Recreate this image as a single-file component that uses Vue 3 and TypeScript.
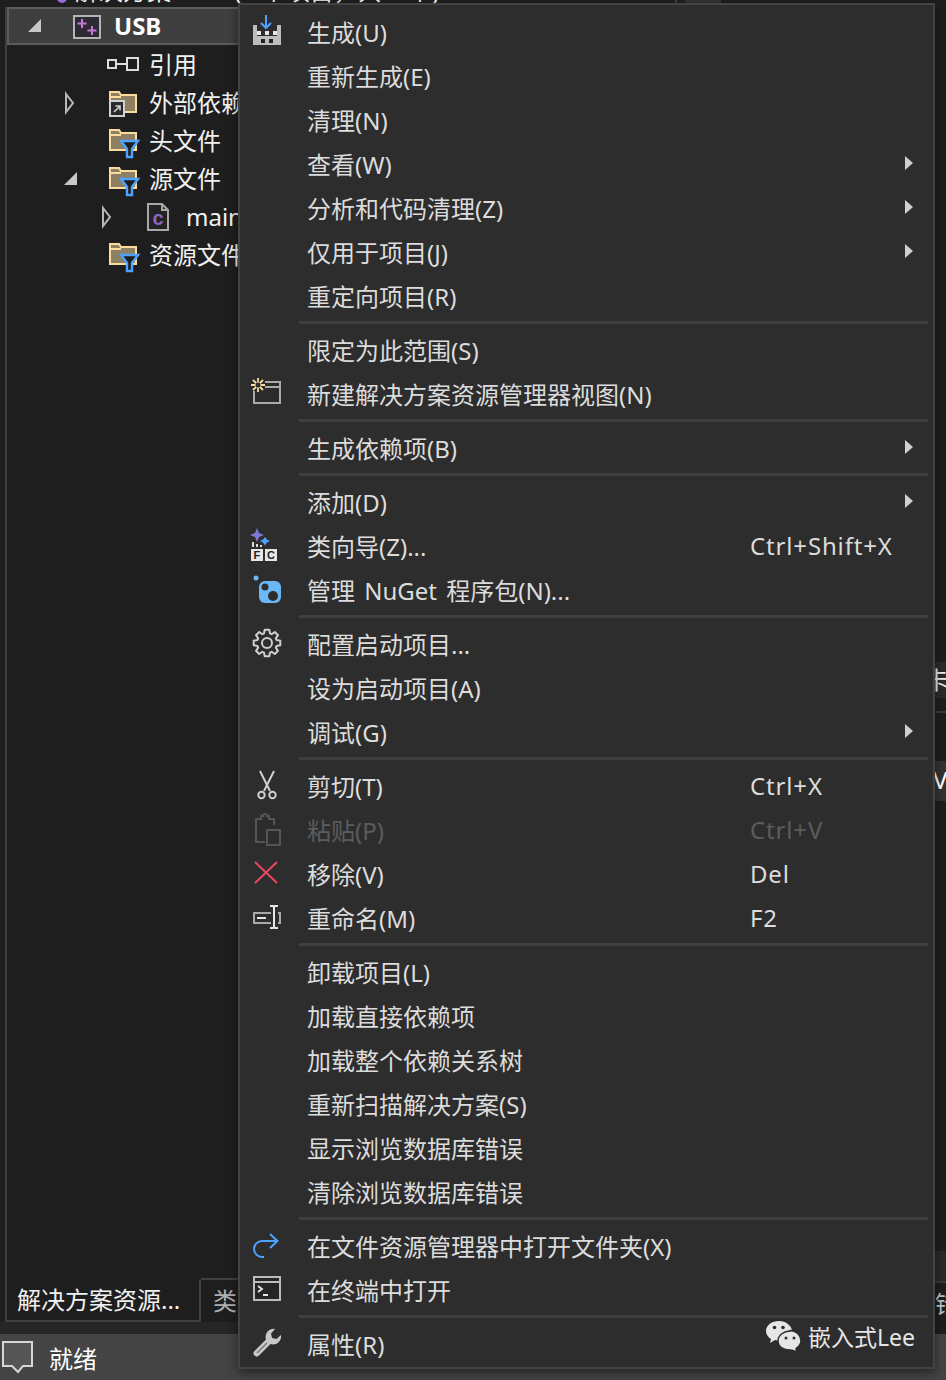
<template>
  <div class="app">
    <div class="workspace">
      <div class="panel">
        <div class="top-row">
          <span class="sol-dot"></span>
          <span class="sol-text">解决方案“USB”(1 个项目，共 1 个)</span>
          <span class="top-line"></span>
          <span class="top-band"></span>
        </div>
        <div class="tree">
          <div
            v-for="row in treeRows"
            :key="row.label"
            class="tree-row"
            :class="[`depth-${row.depth}`, { selected: row.selected }]"
          >
            <span class="tree-arrow">
              <svg v-if="row.arrow === 'open'" width="16" height="38" viewBox="0 0 16 38">
                <path :d="row.selected ? 'M14 12v13H1z' : 'M15 12v13H2z'" fill="#c8c8c8" />
              </svg>
              <svg v-else-if="row.arrow === 'closed'" width="16" height="38" viewBox="0 0 16 38">
                <path d="M4 10l7 9-7 9z" fill="none" stroke="#b8b8b8" stroke-width="2" />
              </svg>
            </span>
            <svg class="tree-icon" width="34" height="38" viewBox="0 0 34 38">
              <template v-if="row.icon === 'project'">
                <rect x="1" y="9" width="26" height="22" fill="#2e2a33" stroke="#b4b4b4" stroke-width="2" />
                <path d="M9 12v9M4.500 16.500h9M19 19v9M14.500 23.500h9" stroke="#c678d8" stroke-width="2" />
              </template>
              <template v-else-if="row.icon === 'ref'">
                <path d="M8 18h11" stroke="#ddd" stroke-width="2" />
                <rect x="0" y="14" width="8" height="8" fill="none" stroke="#ddd" stroke-width="2" />
                <rect x="19" y="12" width="11" height="12" fill="none" stroke="#ddd" stroke-width="2" />
              </template>
              <template v-else-if="row.icon === 'external'">
                <path d="M2 8h9l2 3h15v17H2z" fill="#8c7f62" stroke="#fbdc9f" stroke-width="2" />
                <path d="M3 13h10" stroke="#fbdc9f" stroke-width="2" />
                <rect x="2" y="17" width="14" height="15" fill="#2a2a2a" stroke="#d0d0d0" stroke-width="2" />
                <path d="M6 28l6-6M7.500 22H12v4.500" fill="none" stroke="#d0d0d0" stroke-width="1.600" />
              </template>
              <template v-else-if="row.icon === 'filter'">
                <path d="M2 8h9l2 3h15v17H2z" fill="#8c7f62" stroke="#fbdc9f" stroke-width="2" />
                <path d="M3 13h10" stroke="#fbdc9f" stroke-width="2" />
                <path d="M13 19h17l-6 8v8h-5v-8z" fill="#1e1e1e" stroke="#4da3ff" stroke-width="2.400" />
              </template>
              <template v-else-if="row.icon === 'file'">
                <path d="M3 6h14l6 6v20H3z" fill="#232323" stroke="#a8a8a8" stroke-width="2" />
                <path d="M17 6v6h6" fill="none" stroke="#a8a8a8" stroke-width="2" />
                <text x="7.500" y="27" class="c-glyph">c</text>
              </template>
            </svg>
            <span class="tree-label" :class="{ bold: row.selected }">{{ row.label }}</span>
          </div>
        </div>
        <div class="tabs">
          <div class="tab active">解决方案资源...</div>
          <div class="tab rest">类视图</div>
        </div>
        <div class="tabs-foot"></div>
      </div>

      <div class="edge">
        <div class="edge-gap first"></div>
        <div class="edge-band b1"><span class="edge-clip">卡</span></div>
        <div class="edge-gap small"></div>
        <div class="edge-band b2"><span class="edge-v">V</span></div>
        <div class="edge-gap"></div>
        <div class="edge-band b3"></div>
        <div class="edge-band b4"><span class="edge-low">错</span></div>
      </div>
    </div>

    <div class="status">
      <svg width="32" height="36" viewBox="0 0 32 36">
        <path d="M2 3h29v24H22l-5 6-6-6H2z" fill="#555" stroke="#d6d6d6" stroke-width="2" />
      </svg>
      <span class="status-text">就绪</span>
    </div>

    <div class="menu">
      <template v-for="(group, gi) in menuGroups" :key="gi">
        <div v-if="gi > 0" class="sep"></div>
        <div
          v-for="item in group"
          :key="item.label"
          class="menu-row"
          :class="{ disabled: item.disabled }"
        >
          <svg class="menu-icon" width="32" height="44" viewBox="0 0 32 44">
            <template v-if="item.icon === 'build'">
              <path d="M2 14h4v11h20V14h4v20H2z" fill="#bdbdbd" />
              <path d="M6 20h4v4H6zM14 20h4v4h-4zM22 20h4v4h-4z" fill="#e8e8e8" />
              <path d="M10 28h4v4h-4zM18 28h4v4h-4z" fill="#222" />
              <path d="M15 4v13M10 12l5 5 5-5" fill="none" stroke="#4da3ff" stroke-width="2" />
            </template>
            <template v-else-if="item.icon === 'newview'">
              <path d="M14 9h15v21H3V18" fill="#2b2b2b" stroke="#ababab" stroke-width="2" />
              <path d="M14 14h15" stroke="#ababab" stroke-width="2" />
              <path d="M7 5v14M0 12h14M2 7l10 10M12 7L2 17" stroke="#fbdc9f" stroke-width="1.800" />
              <circle cx="7" cy="12" r="2.500" fill="#2d2d2d" />
            </template>
            <template v-else-if="item.icon === 'wizard'">
              <path d="M6 3l2 5 5 2-5 2-2 5-2-5-5-2 5-2z" fill="#7b78d8" />
              <path d="M14 12l2 2.500 3 1.500-3 1.500-2 3-2-3-3-1.500 3-1.500z" fill="#4da3ff" />
              <path d="M1 17h2v5H1zM5 19h2v3H5zM9 20h2v2H9z" fill="#ddd" />
              <rect x="0" y="24" width="12" height="12" fill="#e6e6e6" />
              <rect x="14" y="24" width="12" height="12" fill="#e6e6e6" />
              <text x="2.600" y="34" class="fc-glyph">F</text>
              <text x="16" y="34" class="fc-glyph">C</text>
            </template>
            <template v-else-if="item.icon === 'nuget'">
              <circle cx="5" cy="9" r="2.500" fill="#6cb8f6" />
              <rect x="8" y="12" width="22" height="22" rx="6" fill="#6cb8f6" />
              <circle cx="14" cy="18" r="3.500" fill="#2d2d2d" />
              <circle cx="22" cy="27" r="5" fill="#2d2d2d" />
            </template>
            <template v-else-if="item.icon === 'gear'">
              <path :d="gearPath" fill="none" stroke="#cfcfcf" stroke-width="2" stroke-linejoin="round" />
              <circle cx="16" cy="20" r="5" fill="none" stroke="#cfcfcf" stroke-width="2" />
            </template>
            <template v-else-if="item.icon === 'cut'">
              <path d="M9 6l10 20M23 6L13 26" fill="none" stroke="#cfcfcf" stroke-width="2" />
              <circle cx="10.500" cy="30" r="3.200" fill="none" stroke="#cfcfcf" stroke-width="2" />
              <circle cx="21.500" cy="30" r="3.200" fill="none" stroke="#cfcfcf" stroke-width="2" />
            </template>
            <template v-else-if="item.icon === 'paste'">
              <path d="M14 33H5V10h5V7h2a2 2 0 0 1 4 0h2v3h5v6" fill="none" stroke="#555" stroke-width="2" />
              <rect x="16" y="21" width="13" height="15" fill="none" stroke="#555" stroke-width="2" />
            </template>
            <template v-else-if="item.icon === 'remove'">
              <path d="M4 9l22 21M26 9L4 30" stroke="#e8475f" stroke-width="2" />
            </template>
            <template v-else-if="item.icon === 'rename'">
              <path d="M20 16H3v10h17M27 16h2v10h-2" fill="none" stroke="#aaa" stroke-width="2" />
              <path d="M6 21h9" stroke="#e6e6e6" stroke-width="2" />
              <path d="M19 9h3l1 1 1-1h3M23 10v20M19 31h3l1-1 1 1h3" fill="none" stroke="#e6e6e6" stroke-width="2" />
            </template>
            <template v-else-if="item.icon === 'open'">
              <path d="M26 16H11a8 8 0 0 0 0 16h2M19 9l7.500 7-7.500 7" fill="none" stroke="#4da3ff" stroke-width="2" />
            </template>
            <template v-else-if="item.icon === 'terminal'">
              <rect x="3" y="8" width="26" height="23" fill="#252525" stroke="#bcbcbc" stroke-width="2" />
              <path d="M3 13h26" stroke="#bcbcbc" stroke-width="2" />
              <path d="M7 17l4 3-4 3" fill="none" stroke="#e6e6e6" stroke-width="1.800" />
              <path d="M12 26h5" stroke="#e6e6e6" stroke-width="2" />
            </template>
            <template v-else-if="item.icon === 'props'">
              <path d="M24 6a8 8 0 0 0-9 10.500L3.500 28a3 3 0 0 0 4.500 4.500L19.500 21A8 8 0 0 0 30 12l-4.500 4-4.500-1-1-4.500z" fill="#c8c8c8" />
              <path d="M6 30l10-10" stroke="#777" stroke-width="1.500" />
            </template>
          </svg>
          <span class="menu-label">{{ item.label }}</span>
          <span class="menu-keys">{{ item.keys }}</span>
          <svg v-if="item.sub" class="menu-arrow" width="8" height="44" viewBox="0 0 8 44">
            <path d="M0 13l8 7-8 7z" fill="#d0d0d0" />
          </svg>
        </div>
      </template>
      <div class="watermark">
        <svg width="37" height="32" viewBox="0 0 37 32">
          <path d="M14 1C7 1 1 5 1 11c0 3.500 2 6 5 8l-1 4 5-3c1.500.4 3 .6 4 .6C21 20.600 27 16 27 11S21 1 14 1z" fill="#e6e6e6" />
          <path d="M25 11c-6 0-12 4-12 10s6 9 12 9c1.500 0 2 0 3 .4l4 1.600-1-3.500c3-2 5-4 5-7.500 0-6-5-10.500-11-10.500z" fill="#e6e6e6" stroke="#2d2d2d" stroke-width="1.500" />
          <circle cx="9.500" cy="7.500" r="1.800" fill="#2d2d2d" />
          <circle cx="18" cy="7.500" r="1.800" fill="#2d2d2d" />
          <circle cx="21" cy="18" r="1.500" fill="#2d2d2d" />
          <circle cx="29" cy="18" r="1.500" fill="#2d2d2d" />
        </svg>
        <span>嵌入式Lee</span>
      </div>
    </div>
  </div>
</template>

<script setup lang="ts">
interface TreeRow {
  label: string
  depth: number
  icon: string
  arrow?: 'open' | 'closed'
  selected?: boolean
}

interface MenuItem {
  label: string
  icon?: string
  keys?: string
  sub?: boolean
  disabled?: boolean
}

const treeRows: TreeRow[] = [
  { label: 'USB', depth: 0, icon: 'project', arrow: 'open', selected: true },
  { label: '引用', depth: 1, icon: 'ref' },
  { label: '外部依赖项', depth: 1, icon: 'external', arrow: 'closed' },
  { label: '头文件', depth: 1, icon: 'filter' },
  { label: '源文件', depth: 1, icon: 'filter', arrow: 'open' },
  { label: 'main.c', depth: 2, icon: 'file', arrow: 'closed' },
  { label: '资源文件', depth: 1, icon: 'filter' },
]

const menuGroups: MenuItem[][] = [
  [
    { label: '生成(U)', icon: 'build' },
    { label: '重新生成(E)' },
    { label: '清理(N)' },
    { label: '查看(W)', sub: true },
    { label: '分析和代码清理(Z)', sub: true },
    { label: '仅用于项目(J)', sub: true },
    { label: '重定向项目(R)' },
  ],
  [
    { label: '限定为此范围(S)' },
    { label: '新建解决方案资源管理器视图(N)', icon: 'newview' },
  ],
  [{ label: '生成依赖项(B)', sub: true }],
  [
    { label: '添加(D)', sub: true },
    { label: '类向导(Z)...', icon: 'wizard', keys: 'Ctrl+Shift+X' },
    { label: '管理 NuGet 程序包(N)...', icon: 'nuget' },
  ],
  [
    { label: '配置启动项目...', icon: 'gear' },
    { label: '设为启动项目(A)' },
    { label: '调试(G)', sub: true },
  ],
  [
    { label: '剪切(T)', icon: 'cut', keys: 'Ctrl+X' },
    { label: '粘贴(P)', icon: 'paste', keys: 'Ctrl+V', disabled: true },
    { label: '移除(V)', icon: 'remove', keys: 'Del' },
    { label: '重命名(M)', icon: 'rename', keys: 'F2' },
  ],
  [
    { label: '卸载项目(L)' },
    { label: '加载直接依赖项' },
    { label: '加载整个依赖关系树' },
    { label: '重新扫描解决方案(S)' },
    { label: '显示浏览数据库错误' },
    { label: '清除浏览数据库错误' },
  ],
  [
    { label: '在文件资源管理器中打开文件夹(X)', icon: 'open' },
    { label: '在终端中打开', icon: 'terminal' },
  ],
  [{ label: '属性(R)', icon: 'props' }],
]

// 8-tooth gear outline around the icon centre
const gearPath = (() => {
  const pts: string[] = []
  for (let i = 0; i < 8; i++) {
    const a = (i * Math.PI) / 4
    const offsets: [number, number][] = [
      [-0.3, 10],
      [-0.17, 13.5],
      [0.17, 13.5],
      [0.3, 10],
    ]
    for (const [da, r] of offsets) {
      pts.push(`${(16 + r * Math.cos(a + da)).toFixed(1)} ${(20 + r * Math.sin(a + da)).toFixed(1)}`)
    }
  }
  return `M${pts.join('L')}Z`
})()
</script>

<style>
html,
body {
  background: #1e1e1e;
}
</style>

<style scoped>
.app {
  position: relative;
  width: 946px;
  height: 1380px;
  display: flex;
  flex-direction: column;
  overflow: hidden;
  background: #1e1e1e;
  font-family: "Noto Sans", "Noto Sans CJK SC", sans-serif;
  font-size: 24px;
  color: #f1f1f1;
}

.workspace {
  flex: 1;
  display: flex;
  min-height: 0;
}

.panel {
  width: 935px;
  display: flex;
  flex-direction: column;
}

.top-row {
  height: 7px;
  flex: none;
  display: flex;
  align-items: flex-end;
  overflow: hidden;
  padding-left: 57px;
}

.sol-dot {
  width: 10px;
  height: 10px;
  margin: 0 8px 4px 0;
  border-radius: 50%;
  background: #9a6bd8;
  flex: none;
}

.sol-text {
  line-height: 24px;
  margin-bottom: 4px;
  white-space: nowrap;
  flex: none;
  width: 600px;
}

.top-line {
  width: 2px;
  height: 7px;
  background: #3f3f3f;
  flex: none;
}

.top-band {
  width: 36px;
  height: 7px;
  margin-left: 8px;
  background: #333;
  flex: none;
}

.tree {
  flex: 1;
  margin-left: 5px;
  border-left: 2px solid #3f3f3f;
  min-height: 0;
}

.tree-row {
  height: 38px;
  display: flex;
  align-items: center;
  white-space: nowrap;
  overflow: hidden;
  line-height: 36px;
}

.selected {
  background: #3f3f3f;
  box-shadow: inset 0 2px 0 #5c5c5c, inset 0 -2px 0 #5c5c5c, inset 2px 0 0 #5c5c5c;
  margin-bottom: 1px;
}

.depth-0 {
  padding-left: 20px;
}

.depth-1 {
  padding-left: 55px;
}

.depth-2 {
  padding-left: 92px;
}

.tree-arrow {
  width: 46px;
  height: 38px;
  flex: none;
  box-sizing: border-box;
}

.tree-icon {
  width: 34px;
  flex: none;
  margin-right: 7px;
  overflow: visible;
}

.tree-label {
  flex: none;
}

.bold {
  font-weight: 700;
  color: #fff;
}

.c-glyph {
  font-family: "Liberation Sans", sans-serif;
  font-size: 20px;
  font-weight: 700;
  fill: #8a63c9;
}

.fc-glyph {
  font-family: "Liberation Sans", sans-serif;
  font-size: 11px;
  font-weight: 700;
  fill: #222;
}

.tabs {
  height: 42px;
  flex: none;
  display: flex;
  margin-left: 5px;
}

.tab {
  line-height: 40px;
  white-space: nowrap;
  box-sizing: border-box;
}

.active {
  width: 196px;
  padding-left: 10px;
  border: 2px solid #3f3f3f;
  border-top: none;
}

.rest {
  flex: 1;
  padding-left: 12px;
  color: #b0b0b0;
  border-top: 2px solid #3f3f3f;
  margin-top: -2px;
  line-height: 42px;
}

.tabs-foot {
  height: 12px;
  flex: none;
  background: #262626;
}

.edge {
  flex: 1;
  min-width: 0;
  display: flex;
  flex-direction: column;
  overflow: hidden;
  background: #1e1e1e;
}

.edge-gap {
  flex: 1;
}

.edge-gap.first {
  flex: none;
  height: 662px;
}

.edge-gap.small {
  flex: none;
  height: 63px;
  background: linear-gradient(#1e1e1e 13px, #3a3a3a 13px, #3a3a3a 15px, #1e1e1e 15px);
}

.edge-band {
  flex: none;
  overflow: hidden;
  white-space: nowrap;
  background: #2b2b2b;
}

.b1 {
  height: 36px;
  line-height: 36px;
}

.b2 {
  height: 40px;
  line-height: 38px;
  background: #333;
}

.b3 {
  height: 30px;
  background: #2a2a2a;
  border-bottom: 2px solid #3a3a3a;
}

.b4 {
  height: 41px;
  line-height: 41px;
  background: #1e1e1e;
  margin-bottom: 10px;
}

.edge-clip {
  margin-left: -10px;
}

.edge-v {
  margin-left: -2px;
  color: #fff;
}

.edge-low {
  color: #b9c4cc;
  margin-left: 0;
}

.status {
  height: 46px;
  flex: none;
  display: flex;
  align-items: center;
  padding-left: 1px;
  background: #444;
}

.status-text {
  margin-left: 16px;
  color: #fff;
}

.menu {
  position: absolute;
  left: 238px;
  top: 3px;
  width: 697px;
  box-sizing: border-box;
  padding-top: 6px;
  background: #2d2d2d;
  border: 2px solid #434343;
  box-shadow: 0 4px 10px rgba(0, 0, 0, 0.45);
  color: #dcdcdc;
}

.menu-row {
  height: 44px;
  display: grid;
  grid-template-columns: 32px 467px 155px 8px;
  align-items: start;
  padding-left: 11px;
  line-height: 44px;
  white-space: nowrap;
}

.menu-icon {
  display: block;
  overflow: visible;
}

.menu-label {
  margin-left: 24px;
  word-spacing: 3px;
}

.menu-keys {
  letter-spacing: 0.85px;
  margin-top: -1px;
}

.menu-arrow {
  display: block;
}

.disabled {
  color: #5c5c5c;
}

.sep {
  height: 3px;
  margin: 2px 5px 5px 59px;
  background: #3f3f3f;
}

.watermark {
  position: absolute;
  left: 525px;
  top: 1314px;
  display: flex;
  align-items: center;
  gap: 6px;
  font-size: 23px;
  color: #e6e6e6;
  white-space: nowrap;
}
</style>
